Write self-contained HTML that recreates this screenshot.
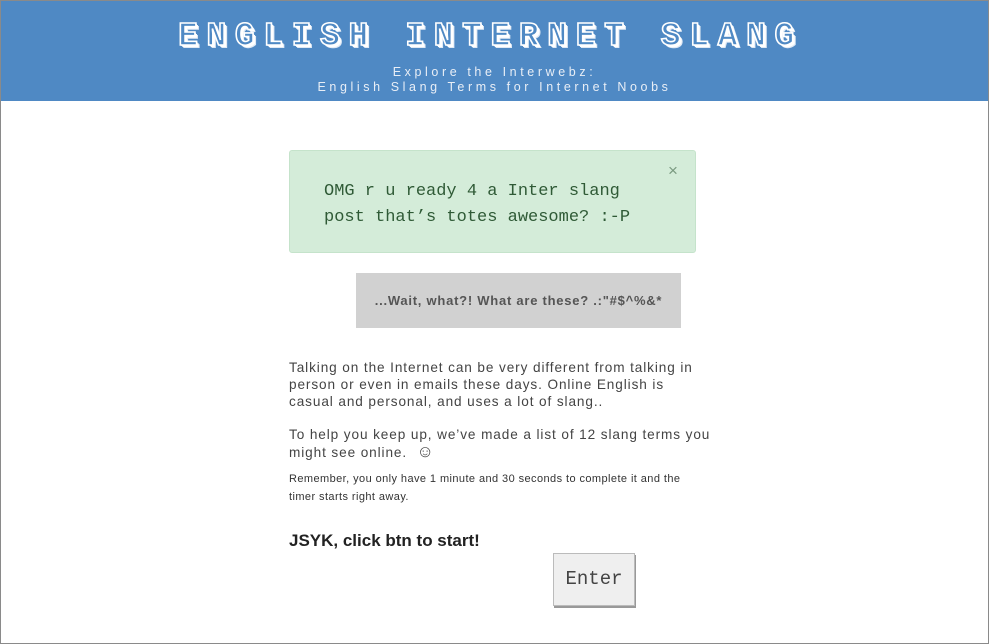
<!DOCTYPE html>
<html><head><meta charset="utf-8"><style>
html,body{margin:0;padding:0}
body{width:989px;height:644px;position:relative;background:#fff;font-family:"Liberation Sans",sans-serif;overflow:hidden}
.frame{position:absolute;left:0;top:0;width:987px;height:642px;border:1px solid #8a8a8a}
.hdr{position:absolute;left:1px;top:1px;width:987px;height:100px;background:#4f89c4}
.title{position:absolute;left:-4px;width:987px;top:17px;text-align:center;font-family:"Liberation Mono",monospace;font-weight:bold;font-size:33px;letter-spacing:8.6px;color:#4f89c4;-webkit-text-stroke:1.6px #fff;text-shadow:1px 1px 0 #fff,2px 2px 0 #fff,3px 3px 0 #dfe9f5}
.sub{position:absolute;left:0;width:987px;top:64px;text-align:center;color:#e8eef6;font-size:12.5px;letter-spacing:3.6px;line-height:14.5px}
.alert{position:absolute;left:289px;top:150px;width:405px;height:101px;background:#d4ecd9;border:1px solid #c5e3cb;border-radius:3px}
.alert .t{position:absolute;left:34px;top:28px;font-family:"Liberation Mono",monospace;font-size:17px;line-height:26px;color:#2f5a36}
.alert .x{position:absolute;left:378px;top:10px;color:#7a9a80;font-size:17px}
.gray{position:absolute;left:356px;top:273px;width:325px;height:55px;background:#d1d1d1;text-align:center;line-height:56px;font-size:13px;font-weight:bold;color:#555;letter-spacing:.75px}
.p{position:absolute;left:289px;color:#444;font-size:13.6px;line-height:17px;letter-spacing:.9px;white-space:nowrap}
.small{position:absolute;left:289px;top:470px;width:440px;font-size:11px;line-height:18px;color:#333;letter-spacing:.42px;white-space:nowrap}
.jsyk{position:absolute;left:289px;top:531px;font-size:17px;font-weight:bold;color:#222}
.btn{position:absolute;left:553px;top:553px;width:80px;height:51px;background:#efefef;border:1px solid #bbb;box-shadow:1px 2px 0 #999;font-family:"Liberation Mono",monospace;font-size:19px;color:#444;text-align:center;line-height:51px}
.sm{font-size:17px}
</style></head><body>
<div class="frame"></div>
<div class="hdr">
<div class="title">ENGLISH INTERNET SLANG</div>
<div class="sub">Explore the Interwebz:<br>English Slang Terms for Internet Noobs</div>
</div>
<div class="alert"><div class="t">OMG r u ready 4 a Inter slang<br>post that’s totes awesome? :-P</div><div class="x">×</div></div>
<div class="gray">...Wait, what?! What are these? .:"#$^%&amp;*</div>
<div class="p" style="top:359px">Talking on the Internet can be very different from talking in<br>person or even in emails these days. Online English is<br>casual and personal, and uses a lot of slang..</div>
<div class="p" style="top:426px">To help you keep up, we’ve made a list of 12 slang terms you<br>might see online. &nbsp;<span class="sm">☺</span></div>
<div class="small">Remember, you only have 1 minute and 30 seconds to complete it and the<br>timer starts right away.</div>
<div class="jsyk">JSYK, click btn to start!</div>
<div class="btn">Enter</div>
</body></html>
